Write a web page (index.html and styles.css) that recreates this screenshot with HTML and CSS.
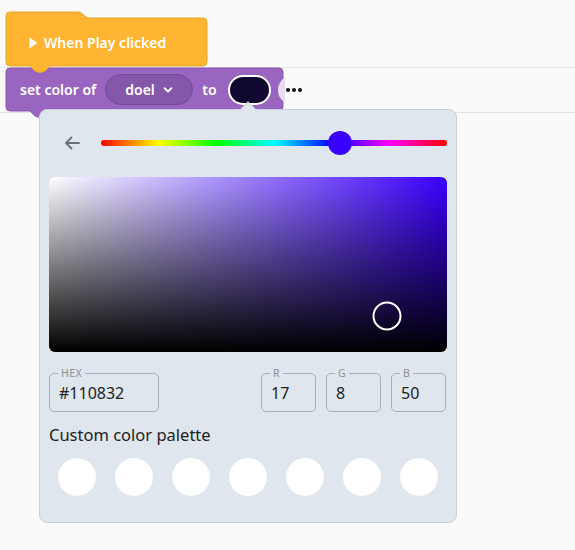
FILE: index.html
```html
<!DOCTYPE html>
<html lang="en">
<head>
<meta charset="utf-8">
<title>Color picker</title>
<link rel="stylesheet" href="styles.css">
</head>
<body>
<div class="workspace">
  <div class="block block-set">
    <svg class="block-shape" width="277" height="50" viewBox="0 0 277 50">
      <path d="M0,4 Q0,0 4,0 L273,0 Q277,0 277,4 L277,39 Q277,43 273,43 L44,43 L39,48 Q34,51 29,48 L24,43 L4,43 Q0,43 0,39 Z" fill="#9a65c0" stroke="#8a57af" stroke-width="1"/>
    </svg>
    <div class="block-row">
      <span class="block-text">set color of</span>
      <span class="dropdown">doel
        <svg class="chev" width="10" height="6" viewBox="0 0 10 6"><path d="M1.5,1.2 L5,4.5 L8.5,1.2" fill="none" stroke="#fff" stroke-width="1.8" stroke-linecap="round" stroke-linejoin="round"/></svg>
      </span>
      <span class="block-text to">to</span>
      <span class="color-pill"></span>
      <span class="more-clip"><span class="more-circle"></span></span>
    </div>
  </div>

  <div class="block block-hat">
    <svg class="block-shape hat-shape" width="202" height="63" viewBox="0 -7 202 63">
      <path d="M0,-2 Q0,-6 4,-6 L72,-6 C77,-6 78,0 84,0 L197,0 Q201,0 201,4 L201,44 Q201,48 197,48 L44,48 L39,53 Q34,56 29,53 L24,48 L4,48 Q0,48 0,44 Z" fill="#ffb531" stroke="#eaa42a" stroke-width="1"/>
    </svg>
    <div class="block-row hat-row">
      <svg class="play" width="9" height="12" viewBox="0 0 9 12"><path d="M0.5,0.5 L8.5,6 L0.5,11.5 Z" fill="#fff"/></svg>
      <span class="block-text">When Play clicked</span>
    </div>
  </div>

  <div class="dots"><span></span><span></span><span></span></div>

  <div class="picker">
    <div class="picker-arrow"></div>
    <div class="picker-head">
      <svg class="back" width="16" height="14" viewBox="0 0 16 14"><path d="M15,7 L2,7 M7.5,1.5 L2,7 L7.5,12.5" fill="none" stroke="#6c7074" stroke-width="1.8" stroke-linecap="round" stroke-linejoin="round"/></svg>
      <div class="hue">
        <div class="hue-thumb" style="left:69.1%"></div>
      </div>
    </div>
    <div class="sv">
      <div class="sv-cursor" style="left:84.9%; top:79.4%"></div>
    </div>
    <div class="fields">
      <div class="field field-hex"><span class="field-label">HEX</span><span class="field-value">#110832</span></div>
      <div class="field field-num field-r"><span class="field-label">R</span><span class="field-value">17</span></div>
      <div class="field field-num"><span class="field-label">G</span><span class="field-value">8</span></div>
      <div class="field field-num"><span class="field-label">B</span><span class="field-value">50</span></div>
    </div>
    <div class="palette-title">Custom color palette</div>
    <div class="palette">
      <span class="swatch"></span><span class="swatch"></span><span class="swatch"></span><span class="swatch"></span><span class="swatch"></span><span class="swatch"></span><span class="swatch"></span>
    </div>
  </div>
</div>
</body>
</html>
```

FILE: styles.css
```css
* { box-sizing: border-box; }

body {
  margin: 0;
  background: #fafafa;
  font-family: "Noto Sans", "Open Sans", sans-serif;
}

.workspace {
  position: relative;
  width: 575px;
  height: 550px;
  overflow: hidden;
  background:
    linear-gradient(#e3e3e3, #e3e3e3) 0 67px / 100% 1px no-repeat,
    linear-gradient(#e3e3e3, #e3e3e3) 0 112px / 100% 1px no-repeat,
    #fafafa;
}

.block {
  position: absolute;
}

.block-shape {
  position: absolute;
  left: 0;
  top: 0;
  overflow: visible;
}

.block-hat {
  left: 6px;
  top: 18px;
  width: 201px;
  height: 48px;
}

.hat-shape {
  top: -7px;
}

.block-set {
  left: 6px;
  top: 68px;
  width: 277px;
  height: 43px;
}

.block-row {
  position: relative;
  display: flex;
  align-items: center;
  height: 100%;
  padding-left: 14px;
  white-space: nowrap;
}

.block-row > * {
  flex: none;
}

.hat-row {
  padding-left: 23px;
  padding-top: 1px;
}

.play {
  margin-right: 6px;
  margin-top: 1px;
}

.block-text {
  color: #fff;
  font-size: 14px;
  font-weight: 600;
  line-height: 20px;
}

.dropdown {
  display: flex;
  align-items: center;
  gap: 8px;
  margin-left: 9px;
  width: 88px;
  height: 31px;
  padding-left: 19px;
  border-radius: 16px;
  background: #8457ab;
  border: 1px solid #77499d;
  color: #fff;
  font-size: 14px;
  font-weight: 600;
}

.chev {
  margin-top: 1px;
}

.to {
  margin-left: 9px;
}

.color-pill {
  margin-left: 11px;
  width: 43px;
  height: 30px;
  border-radius: 15px;
  background: #110832;
  border: 2px solid #fff;
}

.more-clip {
  margin-left: 7px;
  width: 7px;
  height: 30px;
  overflow: hidden;
  position: relative;
}

.more-circle {
  position: absolute;
  left: 0;
  top: 0;
  width: 30px;
  height: 30px;
  border-radius: 50%;
  background: #e8def1;
}

.dots {
  position: absolute;
  left: 286px;
  top: 88px;
  display: flex;
  gap: 2px;
}

.dots span {
  width: 4px;
  height: 4px;
  border-radius: 50%;
  background: #111;
}

.picker {
  position: absolute;
  left: 39px;
  top: 109px;
  width: 418px;
  height: 414px;
  background: #dfe6ed;
  border: 1px solid #c9d1d9;
  border-radius: 8px;
  padding: 21px 9px 0 9px;
}

.picker-arrow {
  position: absolute;
  left: 202px;
  top: -6px;
  width: 12px;
  height: 12px;
  background: #dfe6ed;
  border-top: 1px solid #d3dae2;
  border-left: 1px solid #d3dae2;
  transform: rotate(45deg);
}

.picker-head {
  display: flex;
  align-items: center;
  height: 24px;
}

.back {
  margin-left: 15px;
  margin-right: 21px;
  flex: none;
}

.hue {
  position: relative;
  flex: 1;
  height: 6px;
  border-radius: 3px;
  background: linear-gradient(to right, #ff0000, #ffff00 16.7%, #00ff00 33.3%, #00ffff 50%, #0000ff 66.7%, #ff00ff 83.3%, #ff0000);
}

.hue-thumb {
  position: absolute;
  top: 50%;
  width: 24px;
  height: 24px;
  border-radius: 50%;
  background: #3a00ff;
  transform: translate(-50%, -50%);
}

.sv {
  position: relative;
  margin-top: 22px;
  height: 175px;
  border-radius: 6px;
  background:
    linear-gradient(to bottom, rgba(0,0,0,0), #000),
    linear-gradient(to right, #fff, rgba(255,255,255,0)),
    #3a00ff;
}

.sv-cursor {
  position: absolute;
  width: 29px;
  height: 29px;
  border-radius: 50%;
  border: 2px solid #fff;
  transform: translate(-50%, -50%);
}

.fields {
  display: flex;
  gap: 10px;
  margin-top: 21px;
  height: 39px;
}

.field {
  position: relative;
  height: 39px;
  border: 1px solid #a9afb6;
  border-radius: 5px;
  display: flex;
  align-items: center;
  padding-left: 9px;
}

.field-hex {
  width: 110px;
}

.field-num {
  width: 55px;
}

.field-r {
  margin-left: auto;
}

.fields .field:last-child {
  margin-right: 1px;
}

.field-label {
  position: absolute;
  left: 8px;
  top: -7px;
  padding: 0 3px;
  background: #dfe6ed;
  color: #8a8f95;
  font-size: 10.5px;
  line-height: 12px;
  letter-spacing: 0.5px;
}

.field-value {
  color: #222;
  font-size: 16px;
  line-height: 22px;
  margin-top: 1px;
}

.palette-title {
  margin-top: 12px;
  color: #222;
  font-size: 16.5px;
  line-height: 22px;
}

.palette {
  display: flex;
  gap: 19px;
  margin-top: 12px;
  padding-left: 9px;
}

.swatch {
  width: 38px;
  height: 38px;
  border-radius: 50%;
  background: #fff;
}
```
